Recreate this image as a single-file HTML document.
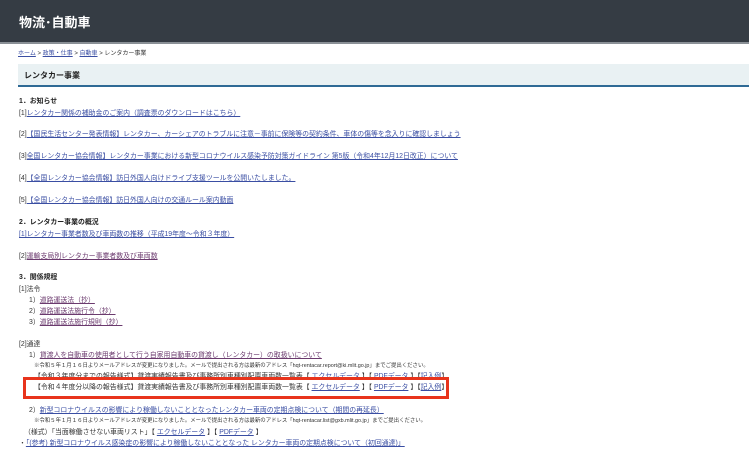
<!DOCTYPE html>
<html><head><meta charset="utf-8"><style>
body{margin:0;width:749px;height:453px;overflow:hidden;background:#fff;font-family:"Liberation Sans","Noto Sans CJK JP",sans-serif;position:relative;color:#333}
.hd{position:absolute;left:0;top:0;width:749px;height:42px;background:#353c44;border-bottom:2px solid #8a9096}
.hd span{position:absolute;left:19px;top:12px;color:#fff;font-size:13px;font-weight:bold}
.l{position:absolute;font-size:6.9px;white-space:nowrap;line-height:9px}
a{color:#3a4ea3;text-decoration:underline}
a.v{color:#6b3a6e}
b{font-weight:bold;color:#222}
.tb{position:absolute;left:18px;top:64px;width:731px;height:21px;background:#e9f1f3;border-bottom:2px solid #2f6a95}
.tb span{position:absolute;left:6px;top:6px;font-size:8px;font-weight:bold;color:#222}
.box{position:absolute;left:23px;top:377px;width:420px;height:16px;border:3px solid #e8341c;background:#fff}
.s{font-size:5.4px}
</style></head><body>
<div class="hd"><span>物流･自動車</span></div>
<div class="l" style="left:18px;top:50px;font-size:6px"><a>ホーム</a> &gt; <a>政策・仕事</a> &gt; <a>自動車</a> &gt; レンタカー事業</div>
<div class="tb"><span>レンタカー事業</span></div>
<div class="l" style="left:19px;top:97px"><b>1．お知らせ</b></div>
<div class="l" style="left:19px;top:109px">[1]<a>レンタカー関係の補助金のご案内（調査票のダウンロードはこちら）</a></div>
<div class="l" style="left:19px;top:130px">[2]<a>【国民生活センター発表情報】レンタカー、カーシェアのトラブルに注意－事前に保険等の契約条件、車体の傷等を念入りに確認しましょう</a></div>
<div class="l" style="left:19px;top:152px">[3]<a>全国レンタカー協会情報】レンタカー事業における新型コロナウイルス感染予防対策ガイドライン 第5版（令和4年12月12日改正）について</a></div>
<div class="l" style="left:19px;top:174px">[4]<a>【全国レンタカー協会情報】訪日外国人向けドライブ支援ツールを公開いたしました。</a></div>
<div class="l" style="left:19px;top:196px">[5]<a>【全国レンタカー協会情報】訪日外国人向けの交通ルール案内動画</a></div>
<div class="l" style="left:19px;top:218px"><b>2．レンタカー事業の概況</b></div>
<div class="l" style="left:19px;top:230px"><a>[1]レンタカー事業者数及び車両数の推移（平成19年度～令和３年度）</a></div>
<div class="l" style="left:19px;top:252px">[2]<a class="v">運輸支局別レンタカー事業者数及び車両数</a></div>
<div class="l" style="left:19px;top:273px"><b>3．関係規程</b></div>
<div class="l" style="left:19px;top:285px">[1]法令</div>
<div class="l" style="left:29px;top:296px">1）<a class="v">道路運送法（抄）</a></div>
<div class="l" style="left:29px;top:307px">2）<a class="v">道路運送法施行令（抄）</a></div>
<div class="l" style="left:29px;top:318px">3）<a class="v">道路運送法施行規則（抄）</a></div>
<div class="l" style="left:19px;top:340px">[2]通達</div>
<div class="l" style="left:29px;top:351px">1）<a class="v">貸渡人を自動車の使用者として行う自家用自動車の貸渡し（レンタカー）の取扱いについて</a></div>
<div class="l s" style="left:34px;top:362px">※令和５年１月１６日よりメールアドレスが変更になりました。メールで提出される方は最新のアドレス「hqt-rentacar.report@ki.mlit.go.jp」までご提出ください。</div>
<div class="l" style="left:34px;top:372px">【令和３年度分までの報告様式】貸渡実績報告書及び事務所別車種別配置車両数一覧表【 <a>エクセルデータ</a> 】【 <a>PDFデータ</a> 】【<a>記入例</a>】</div>
<div class="box"></div>
<div class="l" style="left:34px;top:383px">【令和４年度分以降の報告様式】貸渡実績報告書及び事務所別車種別配置車両数一覧表【 <a>エクセルデータ</a> 】【 <a>PDFデータ</a> 】【<a>記入例</a>】</div>
<div class="l" style="left:29px;top:406px">2）<a>新型コロナウイルスの影響により稼働しないこととなったレンタカー車両の定期点検について（期間の再延長）</a></div>
<div class="l s" style="left:34px;top:417px">※令和５年１月１６日よりメールアドレスが変更になりました。メールで提出される方は最新のアドレス「hqt-rentacar.list@gxb.mlit.go.jp」までご提出ください。</div>
<div class="l" style="left:24px;top:428px">（様式）「当面稼働させない車両リスト」【 <a>エクセルデータ</a> 】【 <a>PDFデータ</a> 】</div>
<div class="l" style="left:19px;top:439px">・<a>「(参考) 新型コロナウイルス感染症の影響により稼働しないこととなった レンタカー車両の定期点検について（初回通達)」</a></div>
</body></html>
